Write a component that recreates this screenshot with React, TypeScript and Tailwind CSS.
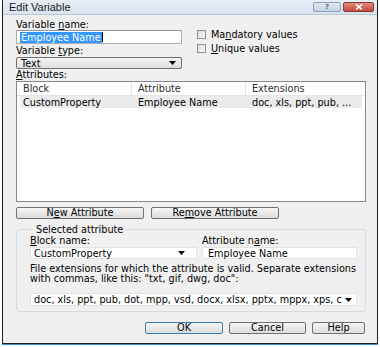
import React from "react";

function Btn({ children, className = "", primary = false }: { children: React.ReactNode; className?: string; primary?: boolean }) {
  return (
    <div
      className={`h-[12px] flex items-center justify-center rounded-[2px] border bg-gradient-to-b from-[#f6f6f6] to-[#dcdcdc] leading-[10px] text-black ${
        primary ? "border-[#3c7fb1]" : "border-[#707070]"
      } ${className}`}
    >
      {children}
    </div>
  );
}

function Arrow() {
  return (
    <svg width="7" height="4" viewBox="0 0 7 4" className="shrink-0">
      <path d="M0 0H7L3.5 4Z" fill="#000" />
    </svg>
  );
}

function CheckBox({ children }: { children: React.ReactNode }) {
  return (
    <div className="flex items-center h-[11px] leading-[11px]">
      <div className="w-[9px] h-[9px] border border-[#8e8f8f] bg-gradient-to-br from-[#dcdcdc] to-[#f8f8f8] mr-[5px]" />
      <span>{children}</span>
    </div>
  );
}

export default function App() {
  return (
    <div
      className="w-[380px] h-[347px] bg-white overflow-hidden text-[9.7px] text-black"
      style={{ fontFamily: '"DejaVu Sans", Verdana, sans-serif' }}
    >
      <div className="ml-[2px] w-[376px] h-[344px] border border-t-0 border-[#1e1e1e] bg-[#f0f0f0] flex flex-col shadow-[0_1px_0_#3a8fd6]">
        {/* Title bar */}
        <div className="h-[15px] shrink-0 flex items-center bg-gradient-to-b from-[#e8eef6] to-[#d8e2ee] border-b border-[#b9c6d6] pl-[6px] pr-[3px]">
          <span
            className="text-[11px] leading-[11px] text-[#1b1b1b]"
            style={{ fontFamily: '"Liberation Sans", Arial, sans-serif' }}
          >
            Edit Variable
          </span>
          <div className="ml-auto flex items-center gap-[2px]">
            <div className="w-[28px] h-[10px] rounded-[2px] border border-[#8ea0b8] bg-gradient-to-b from-[#dfe8f3] to-[#c4d2e3] flex items-center justify-center text-[7px] leading-[7px] font-bold text-[#5b6c84]">
              ?
            </div>
            <div className="w-[31px] h-[10px] rounded-[2px] border border-[#8a3a33] bg-gradient-to-b from-[#e08a7e] to-[#c2483a] flex items-center justify-center">
              <svg width="8" height="6" viewBox="0 0 8 6">
                <path d="M1 0.5L7 5.5M7 0.5L1 5.5" stroke="#fff" strokeWidth="1.6" />
              </svg>
            </div>
          </div>
        </div>

        {/* Content */}
        <div className="pl-[13px] pr-[11px] flex flex-col">
          <div className="flex">
            <div className="w-[166px] flex flex-col">
              <div className="mt-[4px] h-[11px] leading-[11px]">
                Variable <span className="underline">n</span>ame:
              </div>
              <div className="h-[14px] bg-white border border-[#abadb3] border-t-[#8f95a3] flex items-center pl-[3px]">
                <span className="bg-[#3399ff] text-white px-[1px] leading-[11px]">Employee Name</span>
                <span className="w-px h-[10px] bg-black" />
              </div>
              <div className="mt-[2px] h-[10px] leading-[10px]">
                Variable <span className="underline">t</span>ype:
              </div>
              <div className="mt-px h-[12px] rounded-[2px] border border-[#707070] bg-gradient-to-b from-[#f5f5f5] to-[#dedede] flex items-center pl-[4px] pr-[5px]">
                <span className="leading-[11px]">Text</span>
                <span className="ml-auto">
                  <Arrow />
                </span>
              </div>
            </div>
            <div className="ml-[15px] flex flex-col mt-[14px] gap-[3px]">
              <CheckBox>
                Ma<span className="underline">n</span>datory values
              </CheckBox>
              <CheckBox>
                <span className="underline">U</span>nique values
              </CheckBox>
            </div>
          </div>

          <div className="h-[11px] leading-[11px]">
            <span className="underline">A</span>ttributes:
          </div>

          {/* List */}
          <div className="mt-[1px] h-[121px] bg-white border border-[#828790] flex flex-col">
            <div className="h-[14px] flex items-center border-b border-[#e5e5e5] text-[#2e2e2e] leading-[11px]">
              <div className="w-[115px] pl-[6px] border-r border-[#e3e3e3] h-full flex items-center">Block</div>
              <div className="w-[114px] pl-[6px] border-r border-[#e3e3e3] h-full flex items-center">Attribute</div>
              <div className="flex-1 pl-[6px] h-full flex items-center">Extensions</div>
            </div>
            <div className="mx-[3px] h-[12px] flex items-center bg-[#ebebeb] leading-[11px] whitespace-nowrap">
              <div className="w-[112px] pl-[3px]">CustomProperty</div>
              <div className="w-[114px] pl-[6px]">Employee Name</div>
              <div className="flex-1 pl-[6px] overflow-hidden">doc, xls, ppt, pub, ...</div>
            </div>
          </div>

          <div className="mt-[5px] flex gap-[7px]">
            <Btn className="w-[128px]">
              N<span className="underline">e</span>w Attribute
            </Btn>
            <Btn className="w-[128px]">
              Re<span className="underline">m</span>ove Attribute
            </Btn>
          </div>

          {/* Selected attribute */}
          <fieldset className="mt-[5px] min-w-0 border border-[#d5dbe0] rounded-[3px] pl-[13px] pr-[8px] pb-[5px]">
            <legend className="ml-[3px] px-[3px] h-[11px] leading-[11px]">Selected attribute</legend>
            <div className="flex">
              <div className="w-[167px] flex flex-col">
                <div className="h-[11px] leading-[11px]">
                  <span className="underline">B</span>lock name:
                </div>
                <div className="mt-[1px] h-[12px] bg-white border border-[#e3e3e3] flex items-center pl-[3px] pr-[11px]">
                  <span className="leading-[11px]">CustomProperty</span>
                  <span className="ml-auto">
                    <Arrow />
                  </span>
                </div>
              </div>
              <div className="ml-[5px] flex-1 flex flex-col">
                <div className="h-[11px] leading-[11px]">
                  Attribute n<span className="underline">a</span>me:
                </div>
                <div className="mt-[1px] h-[12px] bg-white border border-[#e3e3e3] flex items-center pl-[5px]">
                  <span className="leading-[11px]">Employee Name</span>
                </div>
              </div>
            </div>
            <div className="mt-[5px] leading-[10px]">
              File extensions for which the attribute is valid. Separate extensions
              <br />
              with commas, like this: "txt, gif, dwg, doc":
            </div>
            <div className="mt-[9px] w-[327px] h-[13px] bg-white border border-[#e3e3e3] flex items-center pl-[3px] pr-[4px]">
              <span className="leading-[11px] whitespace-nowrap">
                doc, xls, ppt, pub, dot, mpp, vsd, docx, xlsx, pptx, mppx, xps, c
              </span>
              <span className="ml-auto">
                <Arrow />
              </span>
            </div>
          </fieldset>

          <div className="mt-[10px] flex">
            <Btn primary className="ml-[129px] w-[78px]">
              OK
            </Btn>
            <Btn className="ml-[6px] w-[77px]">Cancel</Btn>
            <Btn className="ml-[6px] w-[53px]">Help</Btn>
          </div>
        </div>
      </div>
    </div>
  );
}
